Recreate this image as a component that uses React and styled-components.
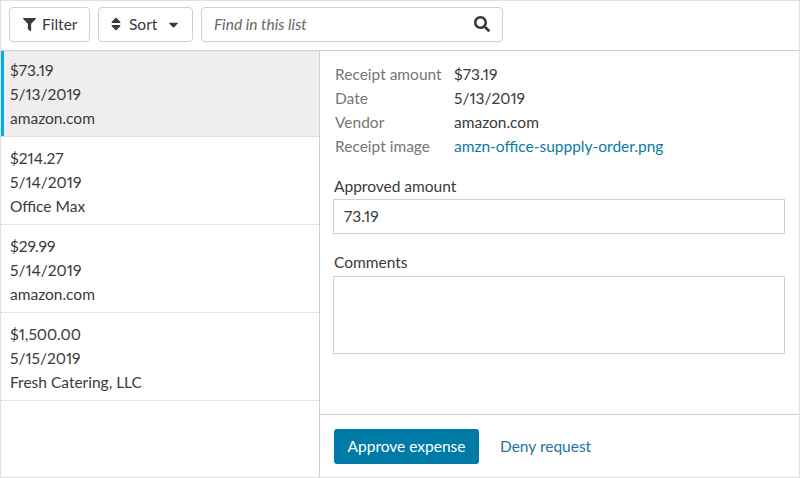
import styled, { createGlobalStyle } from 'styled-components';
import { FaFilter, FaSort, FaCaretDown, FaSearch } from 'react-icons/fa';

const expenses = [
    { amount: '$73.19', date: '5/13/2019', vendor: 'amazon.com', selected: true },
    { amount: '$214.27', date: '5/14/2019', vendor: 'Office Max' },
    { amount: '$29.99', date: '5/14/2019', vendor: 'amazon.com' },
    { amount: '$1,500.00', date: '5/15/2019', vendor: 'Fresh Catering, LLC' },
];

export default function App() {
    return (
        <>
            <Global />
            <Frame>
                <Toolbar>
                    <ToolButton $width={81} $pad={13} $gap={6}><FaFilter size={13} /> Filter</ToolButton>
                    <ToolButton $width={95} $pad={9} $gap={5}><FaSort size={16} /> Sort <Caret size={15} /></ToolButton>
                    <Search>
                        <span>Find in this list</span>
                        <FaSearch size={16} />
                    </Search>
                </Toolbar>
                <Body>
                    <List>
                        {expenses.map(item => (
                            <Item key={item.amount} $selected={item.selected}>
                                <div>{item.amount}</div>
                                <div>{item.date}</div>
                                <div>{item.vendor}</div>
                            </Item>
                        ))}
                    </List>
                    <Detail>
                        <Content>
                            <Facts>
                                <dt>Receipt amount</dt><dd>$73.19</dd>
                                <dt>Date</dt><dd>5/13/2019</dd>
                                <dt>Vendor</dt><dd>amazon.com</dd>
                                <dt>Receipt image</dt><dd><FileLink>amzn-office-suppply-order.png</FileLink></dd>
                            </Facts>
                            <Label $bottom={1}>Approved amount</Label>
                            <Field>73.19</Field>
                            <Label $top={16} $bottom={2}>Comments</Label>
                            <Comments />
                        </Content>
                        <Footer>
                            <Approve>Approve expense</Approve>
                            <Deny>Deny request</Deny>
                        </Footer>
                    </Detail>
                </Body>
            </Frame>
        </>
    );
}

const Global = createGlobalStyle`
    html, body {
        margin: 0;
        padding: 0;
        background: #fff;
    }
    body {
        font-family: 'Lato', sans-serif;
        font-size: 15.5px;
        font-variant-numeric: proportional-nums;
        color: #3a3a3a;
    }
`;

const Frame = styled.div`
    width: 800px;
    height: 478px;
    box-sizing: border-box;
    border: 1px solid #e0e0e0;
    display: flex;
    flex-direction: column;
`;

const Toolbar = styled.div`
    height: 50px;
    box-sizing: border-box;
    border-bottom: 1px solid #d0d0d0;
    padding: 6px 8px;
    display: flex;
    gap: 8px;
`;

const ToolButton = styled.div`
    width: ${p => p.$width}px;
    height: 35px;
    box-sizing: border-box;
    border: 1px solid #d0d0d0;
    border-radius: 4px;
    padding: 0 0 1px ${p => p.$pad}px;
    display: flex;
    align-items: center;
    gap: ${p => p.$gap}px;
`;

const Caret = styled(FaCaretDown)`
    margin-left: 4px;
`;

const Search = styled.div`
    width: 302px;
    height: 35px;
    box-sizing: border-box;
    border: 1px solid #d0d0d0;
    border-radius: 4px;
    padding: 0 12px 1px;
    display: flex;
    align-items: center;
    justify-content: space-between;
    span {
        font-style: italic;
        color: #666;
    }
`;

const Body = styled.div`
    flex: 1;
    display: flex;
    min-height: 0;
`;

const List = styled.div`
    width: 319px;
    box-sizing: border-box;
    border-right: 1px solid #d0d0d0;
`;

const Item = styled.div`
    height: 88px;
    box-sizing: border-box;
    padding: 9px 9px 0;
    line-height: 24px;
    border-bottom: 1px dotted #ccc;
    background: ${p => p.$selected ? '#eee' : '#fff'};
    box-shadow: ${p => p.$selected ? 'inset 3px 0 0 #00aeef' : 'none'};
    &:first-child {
        height: 86px;
        padding-top: 7px;
    }
`;

const Detail = styled.div`
    flex: 1;
    display: flex;
    flex-direction: column;
`;

const Content = styled.div`
    flex: 1;
    padding: 11px 14px 0 13px;
`;

const Facts = styled.dl`
    margin: 0 0 16px 2px;
    display: grid;
    grid-template-columns: 119px 1fr;
    line-height: 24px;
    dt { color: #757575; }
    dd { margin: 0; }
`;

const Label = styled.div`
    line-height: 24px;
    margin-top: ${p => p.$top || 0}px;
    margin-bottom: ${p => p.$bottom}px;
    padding-left: 1px;
`;

const Field = styled.div`
    height: 35px;
    box-sizing: border-box;
    border: 1px solid #d0d0d0;
    padding: 0 10px;
    line-height: 33px;
`;

const Comments = styled.div`
    height: 78px;
    box-sizing: border-box;
    border: 1px solid #d0d0d0;
`;

const FileLink = styled.span`
    color: #0a7aa6;
`;

const Footer = styled.div`
    height: 63px;
    box-sizing: border-box;
    border-top: 1px solid #d0d0d0;
    padding: 14px;
    display: flex;
    align-items: center;
    gap: 21px;
`;

const Approve = styled.div`
    width: 145px;
    height: 35px;
    border-radius: 3px;
    background: #007ba8;
    color: #fff;
    display: flex;
    align-items: center;
    justify-content: center;
`;

const Deny = styled.div`
    color: #1a759f;
`;
